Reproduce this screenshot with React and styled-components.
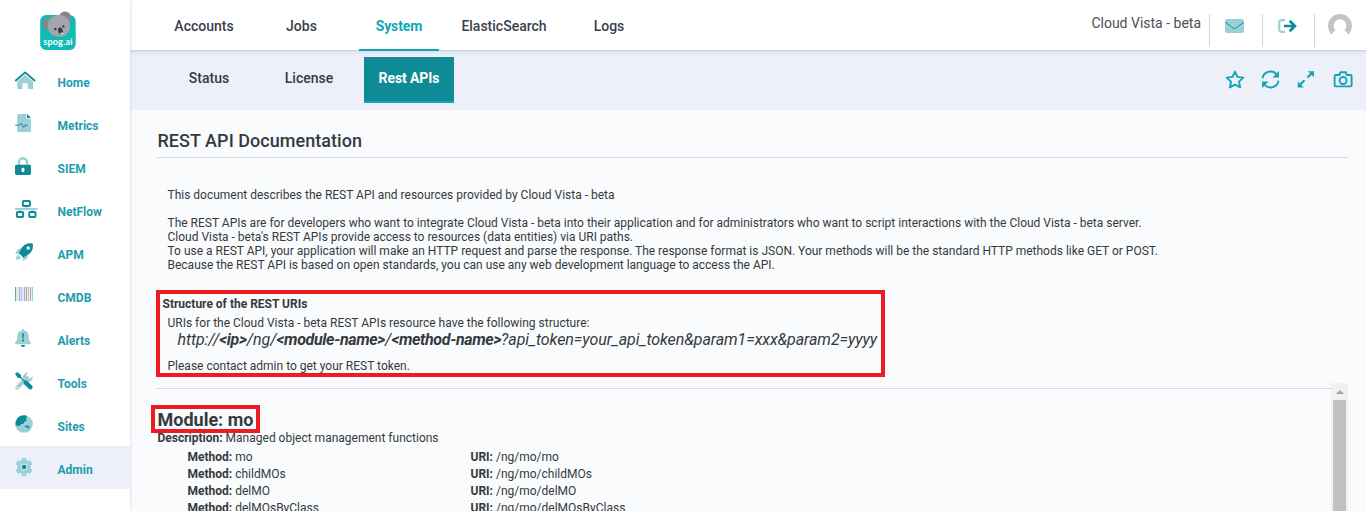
import React from "react";
import styled, { createGlobalStyle, css } from "styled-components";

const teal = "#0f8b98";
const bright = "#12a5b3";
const pale = "#9bd1d6";
const red = "#ed1c24";
const rule = "#d3d9e8";

const GlobalStyle = createGlobalStyle`
  * { box-sizing: border-box; }
  html, body { margin: 0; padding: 0; height: 100%; overflow: hidden; }
  body { font-family: Roboto, "Liberation Sans", sans-serif; font-size: 12px; color: #343a40; background: #fafbfd; }
`;

const Page = styled.div`
  display: flex;
  width: 1366px;
  height: 511px;
  overflow: hidden;
`;

const Sidebar = styled.aside`
  position: relative;
  z-index: 2;
  flex: 0 0 130px;
  background: #fff;
  box-shadow: 0 0 3px #c3cce0;
`;

const LogoBox = styled.div`
  height: 59px;
  padding: 11px 0 0 39px;
  svg { display: block; }
`;

const NavItem = styled.div`
  display: flex;
  align-items: flex-start;
  height: 43px;
  padding-left: 15px;
  background: ${(p) => (p.$active ? "#edf0f8" : "transparent")};
  svg { display: block; margin-top: 12px; flex: 0 0 24px; overflow: visible; }
`;

const NavLabel = styled.span`
  margin-left: 18.5px;
  line-height: 48px;
  font-weight: 700;
  color: #1d9dac;
`;

const Main = styled.main`
  flex: 1;
  display: flex;
  flex-direction: column;
  min-width: 0;
`;

const TopBar = styled.header`
  position: relative;
  z-index: 1;
  display: flex;
  flex: 0 0 51px;
  height: 51px;
  margin-bottom: -1px;
  background: #fff;
  border-bottom: 1px solid #ccd5e7;
  box-shadow: 0 1px 4px #d5dbe9;
  padding-left: 24px;
`;

const TopTab = styled.div`
  width: ${(p) => p.$w}px;
  margin-left: ${(p) => p.$gap || 0}px;
  height: 51px;
  line-height: 52px;
  text-align: center;
  font-size: 14px;
  font-weight: 500;
  color: #3b3f4d;
  ${(p) => p.$active && css`
    color: ${bright};
    font-weight: 700;
    letter-spacing: -0.1px;
    border-bottom: 2px solid ${bright};
  `}
`;

const Account = styled.div`
  display: flex;
  margin-left: auto;
`;

const Product = styled.span`
  font-size: 14px;
  line-height: 46px;
  margin-right: 8px;
  color: #495057;
`;

const AccountCell = styled.div`
  width: ${(p) => p.$w}px;
  height: 33px;
  margin-top: 14px;
  border-left: 1px solid #ccd5e7;
  padding: ${(p) => p.$pad};
  svg { display: block; }
`;

const SubBar = styled.div`
  flex: 0 0 60px;
  display: flex;
  background: #edf0f8;
  padding: 7px 13px 0 29px;
`;

const SubTab = styled.div`
  width: ${(p) => p.$w}px;
  margin-left: ${(p) => p.$gap || 0}px;
  height: 46px;
  line-height: 43px;
  text-align: center;
  font-size: 14px;
  font-weight: 500;
  color: #343a40;
  ${(p) => p.$active && css`
    color: #fff;
    font-weight: 700;
    letter-spacing: -0.1px;
    background: ${teal};
    border-bottom: 2px solid ${bright};
  `}
`;

const Actions = styled.div`
  display: flex;
  gap: 16px;
  margin: 13px 0 0 auto;
  svg { display: block; }
  svg:last-child { margin-left: 1px; }
`;

const Content = styled.section`
  flex: 1;
  min-height: 0;
  padding: 0 18px 0 27px;
  display: flex;
  flex-direction: column;
`;

const Title = styled.h1`
  margin: 0;
  height: 48px;
  padding: 20px 0 0 0.5px;
  line-height: 22px;
  font-size: 18px;
  font-weight: 500;
  letter-spacing: 0.04px;
  border-bottom: 1px solid ${rule};
`;

const Intro = styled.div`
  padding: 30px 0 0 10.5px;
  height: 132px;
  line-height: 14px;
  letter-spacing: -0.005px;
  p { margin: 0 0 14px; }
`;

const Highlight = styled.div`
  width: 729px;
  height: 87px;
  margin-left: -1px;
  border: 4px solid ${red};
  line-height: 14px;
  padding: 3px 0 0 7.5px;
  flex: none;
`;

const Subheading = styled.div`
  font-weight: 700;
  margin-left: -5px;
  margin-bottom: 5px;
`;

const Uri = styled.div`
  font-size: 16px;
  line-height: 20px;
  font-style: italic;
  letter-spacing: -0.08px;
  margin: 0 0 9px 10px;
  white-space: nowrap;
  b { letter-spacing: -0.34px; }
`;

const Modules = styled.div`
  display: flex;
  flex: 1;
  min-height: 0;
  margin-top: 6px;
`;

const ModuleList = styled.div`
  flex: 1;
  margin-top: 5px;
  border-top: 1px solid ${rule};
  padding-top: 16px;
`;

const ModuleName = styled.h2`
  position: relative;
  width: 109px;
  height: 28px;
  margin: 0 0 0 -6px;
  padding-left: 2.5px;
  border: 4px solid ${red};
  font-size: 18px;
  line-height: 22px;
  font-weight: 700;
  white-space: nowrap;
`;

const Description = styled.div`
  line-height: 14px;
  margin: -2px 0 4px;
  padding-left: 0.5px;
`;

const MethodRow = styled.div`
  display: grid;
  grid-template-columns: 283px 1fr;
  padding-left: 30.5px;
  line-height: 17px;
`;

const Strong = styled.b`
  font-weight: 700;
`;

const ScrollTrack = styled.div`
  width: 17px;
  padding: 7px 2px 0;
  background: #f1f1f1;
  display: flex;
  flex-direction: column;
  align-items: center;
`;

const ScrollArrow = styled.i`
  border: 4px solid transparent;
  border-top: 0;
  border-bottom-color: #a3a3a3;
`;

const ScrollThumb = styled.div`
  margin-top: 6px;
  flex: 1;
  width: 13px;
  background: #c1c1c1;
`;

const Icon = ({ children, w = 24, h = 18 }) => (
  <svg width={w} height={h} viewBox={`0 0 ${w} ${h}`} fill="none">{children}</svg>
);

const Logo = () => (
  <svg width="38" height="40" viewBox="0 0 38 40">
    <rect x="1.2" y="4" width="35.5" height="35" rx="6" fill="#10bab5" />
    <circle cx="26" cy="6.5" r="6" fill="#85858f" />
    <circle cx="9.5" cy="13" r="6.2" fill="#85858f" />
    <ellipse cx="20" cy="15" rx="11.3" ry="11" fill="#a3a4ae" transform="rotate(-15 20 15)" />
    <ellipse cx="21.5" cy="20" rx="2.3" ry="3.6" fill="#3d3744" transform="rotate(-15 21.5 20)" />
    <ellipse cx="22.8" cy="22.6" rx="1.6" ry="1" fill="#dcdce2" />
    <circle cx="16.3" cy="18" r="1.2" fill="#3d3744" />
    <circle cx="24.3" cy="15.4" r="1.2" fill="#3d3744" />
    <text x="19" y="34" textAnchor="middle" fontFamily="Lato, sans-serif" fontSize="9" fontWeight="700" letterSpacing="0.2" fill="#fff">spog.ai</text>
  </svg>
);

const icons = {
  Home: <Icon><path d="M2.2 10.5 10.1 3.8 18 10.5V18h-5.3v-5.7H7.5V18H2.2z" fill={pale} /><path d="M.8 9.5 10.2 1.4l9.3 8.1" stroke={teal} strokeWidth="1.9" strokeLinecap="round" strokeLinejoin="round" /></Icon>,
  Metrics: <Icon><path d="M3.2 0h8.2v4.7H16V17a1 1 0 0 1-1 1H3.2a1 1 0 0 1-1-1V1a1 1 0 0 1 1-1z" fill={pale} /><path d="M12 0l4 4.1h-4z" fill={teal} /><path d="M.3 11.2h4.2l1.8-2.1 2.4 4.4 1.6-2.8 1 .7h1.7" stroke={teal} strokeWidth="1" /></Icon>,
  SIEM: <Icon><path d="M4 9V5.2a4 4 0 0 1 8 0V9" stroke={pale} strokeWidth="2.5" /><rect x="0" y="7.8" width="16" height="10.2" rx="1.4" fill={teal} /><rect x="6.6" y="10.8" width="2.8" height="4.2" rx="1.2" fill="#fff" /></Icon>,
  NetFlow: <Icon><path d="M0 9h22.5M11.3 6v3M5 9v3m12.5-3v3" stroke={pale} strokeWidth="1.8" /><rect x="7.9" y="1" width="7" height="5" rx=".7" stroke={teal} strokeWidth="2" /><rect x="1.9" y="12" width="6.2" height="5" rx=".7" stroke={teal} strokeWidth="2" /><rect x="14.3" y="12" width="6.2" height="5" rx=".7" stroke={teal} strokeWidth="2" /></Icon>,
  APM: <Icon><path d="M7 5.5 2.8 6 0 10.8l5 .1zM12.6 11.3v4L8 18l-.4-4.7zM3.4 11.7c-1.6.3-2.3 1.8-2.3 5.1 2.8 0 4.5-.6 5-2.2z" fill={pale} /><path d="M17.8.4c.6 5.5-.8 8.8-5.2 11.6l-4.3 2.5-4.5-4.3 2.4-4.5C9 1.1 12.4-.1 17.8.4z" fill={teal} /><circle cx="13.2" cy="5" r="1.7" fill="#fff" /></Icon>,
  CMDB: <Icon><rect y="1" width="18" height="14" fill="#e6eef6" /><path d="M.5 1v14" stroke="#6fa3a8" /><path d="M2 1v14M10.5 1v14" stroke="#f0dfc4" /><path d="M4.5 1v14M9.5 1v14" stroke="#7cc0f0" /><path d="M6.5 1v14" stroke="#cfc4f3" strokeWidth="2" /><path d="M11.5 1v14M15.5 1v14" stroke="#9fb0b0" /><path d="M13.5 1v14" stroke="#f2b48e" /><path d="M17.5 1v14" stroke="#93d3d8" /></Icon>,
  Alerts: <Icon><path d="M8 0c.8 0 1.3.5 1.2 1.5 3 .6 4.5 2.5 4.5 5.7 0 3.7.8 4.8 1.9 6 .8.9.3 2.1-.7 2.1H1.1c-1 0-1.5-1.2-.7-2.1 1.1-1.2 1.9-2.3 1.9-6 0-3.2 1.5-5.1 4.5-5.7C6.7.5 7.2 0 8 0z" fill={pale} /><path d="M5.8 16h4.4A2.2 2.2 0 0 1 8 18a2.2 2.2 0 0 1-2.2-2zM7 4.6h2l-.4 4.8H7.4z" fill={teal} /><circle cx="8" cy="11.4" r="1.1" fill={teal} /></Icon>,
  Tools: <Icon><path d="M2.3 15.7 12 6" stroke={pale} strokeWidth="4" strokeLinecap="round" /><path d="M17.5 4.2A4.8 4.8 0 1 1 13.4.6l-2.1 2.2.5 3.3 3.3.5z" fill={pale} /><circle cx="2.4" cy="15.7" r=".8" fill="#fff" /><path d="M0 2 2.1 0l4 3v2l3.6 3.7c1-.5 2-.3 2.8.5l4.8 4.7c1.5 1.5-1.5 4.8-3.2 3.2l-4.7-4.7c-.8-.8-1-1.9-.5-2.9L5.2 6H3z" fill={teal} /></Icon>,
  Sites: <Icon><circle cx="9" cy="9" r="8.8" fill={pale} /><path d="M11.2.4c1 1 .7 2.1-.1 3.2l.5 1.7-2.2 1.6-1.2 2.2-2-.1-1.4 2.1-4-.5C-.3 4.5 4.2-1 11.2.4zM9 11.4l3-1.2 2.1 1 .2 2.6-1.8-.7-1-.8z" fill={teal} /></Icon>,
  Admin: <Icon><path d="M7.3.5h3.5l.6 2.2 1.4.8 2.3-.6 1.8 3-1.7 1.7v2.8l1.7 1.7-1.8 3-2.3-.6-1.4.8-.6 2.2H7.3l-.6-2.2-1.4-.8-2.3.6-1.8-3 1.7-1.7V7.6L1.2 5.9 3 2.9l2.3.6 1.4-.8z" fill={pale} stroke={pale} strokeLinejoin="round" /><circle cx="9.1" cy="9" r="3.2" fill="#dcecf2" /><circle cx="9.1" cy="9" r="2.3" fill={teal} /></Icon>,
};

const EnvelopeIcon = () => <Icon w={19} h={14}><rect width="19" height="14" rx="1.8" fill={pale} /><path d="M.3 3.2 7.6 8.7c1.3 1 2.5 1 3.8 0l7.3-5.5" stroke={teal} strokeWidth="1" /></Icon>;
const LogoutIcon = () => <Icon w={19} h={14}><path d="M7 1.2H3.4a2.2 2.2 0 0 0-2.2 2.2v7.2a2.2 2.2 0 0 0 2.2 2.2H7" stroke={pale} strokeWidth="2.2" /><path d="M6 7h10.2M11.7 1.8 16.9 7l-5.2 5.2" stroke={teal} strokeWidth="2.7" /></Icon>;
const Avatar = () => (
  <Icon w={24} h={24}>
    <path d="M3.7 20.6A12 12 0 1 1 20.3 20.6c-.8-2.1-2.3-3.4-4-4.1a6.4 6.4 0 1 0-8.6 0c-1.7.7-3.2 2-4 4.1z" fill="#c4c4c4" />
  </Icon>
);
const StarIcon = () => <Icon w={20} h={19}><path d="m10 1.6 2.4 5.3 5.9.7-4.3 4 1.1 5.8-5.1-2.9-5.1 2.9L6 11.6l-4.3-4 5.9-.7z" stroke={bright} strokeWidth="1.9" strokeLinejoin="round" /></Icon>;
const RefreshIcon = () => <Icon w={19} h={19}><path d="M1.5 8.4a8 8 0 0 1 14.6-3.2M17.5 10.6A8 8 0 0 1 2.9 13.8" stroke={bright} strokeWidth="1.9" /><path d="M18 1v6.5h-6.6zM1 18v-6.5h6.6z" fill={bright} /></Icon>;
const ExpandIcon = () => <Icon w={20} h={19}><path d="m3.5 15.3 5-5M11.5 7.5l4.7-4.7" stroke={bright} strokeWidth="2.2" /><path d="M18 1.2v6l-6-6zM1.8 17.6v-6l6 6z" fill={bright} /></Icon>;
const CameraIcon = () => <Icon w={20} h={19}><path d="M2.8 5h3.5l1.2-2.7h5.2L13.9 5h3.5c.7 0 1.2.5 1.2 1.2v9c0 .7-.5 1.2-1.2 1.2H2.8c-.7 0-1.2-.5-1.2-1.2v-9C1.6 5.5 2.1 5 2.8 5z" stroke={bright} strokeWidth="1.9" /><circle cx="10.1" cy="10.5" r="3.5" stroke={bright} strokeWidth="1.9" /></Icon>;

const methods = ["mo", "childMOs", "delMO", "delMOsByClass"];

export default function App() {
  return (
    <Page>
      <GlobalStyle />
      <Sidebar>
        <LogoBox><Logo /></LogoBox>
        {Object.entries(icons).map(([name, icon]) => (
          <NavItem key={name} $active={name === "Admin"}>
            {icon}
            <NavLabel>{name}</NavLabel>
          </NavItem>
        ))}
      </Sidebar>
      <Main>
        <TopBar>
          <TopTab $w={100}>Accounts</TopTab>
          <TopTab $w={95}>Jobs</TopTab>
          <TopTab $w={80} $gap={10} $active>System</TopTab>
          <TopTab $w={130}>ElasticSearch</TopTab>
          <TopTab $w={80}>Logs</TopTab>
          <Account>
            <Product>Cloud Vista - beta</Product>
            <AccountCell $w={53} $pad="5px 0 0 15px"><EnvelopeIcon /></AccountCell>
            <AccountCell $w={52} $pad="5px 0 0 15px"><LogoutIcon /></AccountCell>
            <AccountCell $w={52} $pad="0 0 0 13px"><Avatar /></AccountCell>
          </Account>
        </TopBar>
        <SubBar>
          <SubTab $w={100}>Status</SubTab>
          <SubTab $w={100}>License</SubTab>
          <SubTab $w={90} $gap={5} $active>Rest APIs</SubTab>
          <Actions><StarIcon /><RefreshIcon /><ExpandIcon /><CameraIcon /></Actions>
        </SubBar>
        <Content>
          <Title>REST API Documentation</Title>
          <Intro>
            <p>This document describes the REST API and resources provided by Cloud Vista - beta</p>
            <p>
              The REST APIs are for developers who want to integrate Cloud Vista - beta into their application and for administrators who want to script interactions with the Cloud Vista - beta server.<br />
              Cloud Vista - beta's REST APIs provide access to resources (data entities) via URI paths.<br />
              To use a REST API, your application will make an HTTP request and parse the response. The response format is JSON. Your methods will be the standard HTTP methods like GET or POST.<br />
              Because the REST API is based on open standards, you can use any web development language to access the API.
            </p>
          </Intro>
          <Highlight>
            <Subheading>Structure of the REST URIs</Subheading>
            <div>URIs for the Cloud Vista - beta REST APIs resource have the following structure:</div>
            <Uri>http://<b>&lt;ip&gt;</b>/ng/<b>&lt;module-name&gt;</b>/<b>&lt;method-name&gt;</b>?api_token=your_api_token&amp;param1=xxx&amp;param2=yyyy</Uri>
            <div>Please contact admin to get your REST token.</div>
          </Highlight>
          <Modules>
            <ModuleList>
              <ModuleName>Module: mo</ModuleName>
              <Description><Strong>Description:</Strong> Managed object management functions</Description>
              {methods.map((m) => (
                <MethodRow key={m}>
                  <span><Strong>Method:</Strong> {m}</span>
                  <span><Strong>URI:</Strong> /ng/mo/{m}</span>
                </MethodRow>
              ))}
            </ModuleList>
            <ScrollTrack><ScrollArrow /><ScrollThumb /></ScrollTrack>
          </Modules>
        </Content>
      </Main>
    </Page>
  );
}
